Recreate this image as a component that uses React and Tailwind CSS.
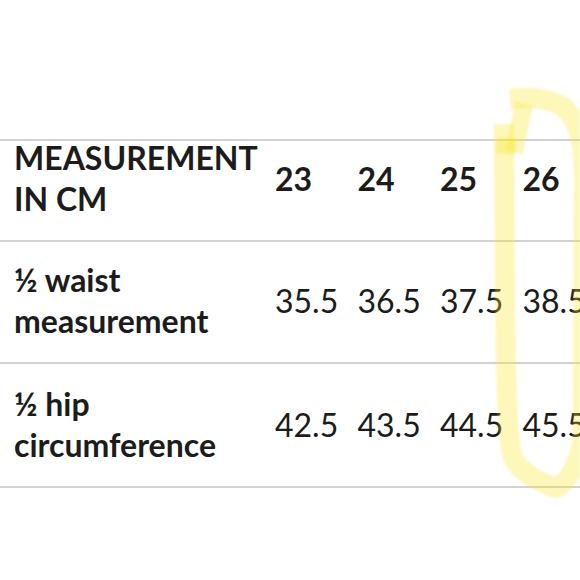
import React from "react";

const cols = ["23", "24", "25", "26"];
const rows = [
  { label: ["½ waist", "measurement"], values: ["35.5", "36.5", "37.5", "38.5"], pt: "pt-[17px]" },
  { label: ["½ hip", "circumference"], values: ["42.5", "43.5", "44.5", "45.5"], pt: "pt-[19px]" },
];

function Highlight() {
  const stroke = "rgba(248,230,40,0.32)";
  return (
    <svg
      className="absolute left-0 top-0 pointer-events-none blur-[1px]"
      width="580"
      height="580"
      viewBox="0 0 580 580"
    >
      <path
        d="M 504 134 L 505 300 Q 506 440 513 458 Q 522 476 556 488 Q 575 478 583 440 L 584 170 Q 583 122 562 106 Q 542 96 520 98"
        fill="none"
        stroke={stroke}
        strokeWidth="20"
        strokeLinecap="square"
        strokeLinejoin="round"
      />
      <path
        d="M 524 104 L 514 152"
        fill="none"
        stroke={stroke}
        strokeWidth="18"
        strokeLinecap="butt"
      />
      <path
        d="M 496 145 L 516 147"
        fill="none"
        stroke={stroke}
        strokeWidth="16"
        strokeLinecap="butt"
      />
    </svg>
  );
}

export default function App() {
  return (
    <div
      className="relative w-[580px] h-[580px] overflow-hidden bg-white text-[#1c1c1c]"
      style={{ fontFamily: "Lato, 'Open Sans', sans-serif" }}
    >
      <div className="pt-[139px]">
        <div className="border-t-2 border-[#d2d2d2] pb-[21px]">
          <div className="flex items-center -mt-[4px] text-[32px] leading-[41px] font-bold">
            <div className="w-[261px] shrink-0 pl-[14px]">
              <div>MEASUREMENT</div>
              <div>IN CM</div>
            </div>
            {cols.map((c) => (
              <div key={c} className="w-[82.5px] shrink-0 pl-[14px]">
                {c}
              </div>
            ))}
          </div>
        </div>
        {rows.map((r, i) => (
          <div
            key={i}
            className={`border-t-2 border-[#d2d2d2] pb-[21px] ${r.pt} ${i === rows.length - 1 ? "border-b-2" : ""}`}
          >
            <div className="flex items-center text-[32px] leading-[41px]">
              <div className="w-[261px] shrink-0 pl-[14px] font-bold">
                <div>{r.label[0]}</div>
                <div>{r.label[1]}</div>
              </div>
              {r.values.map((v) => (
                <div key={v} className="w-[82.5px] shrink-0 pl-[14px] font-normal whitespace-nowrap">
                  {v}
                </div>
              ))}
            </div>
          </div>
        ))}
      </div>
      <Highlight />
    </div>
  );
}
